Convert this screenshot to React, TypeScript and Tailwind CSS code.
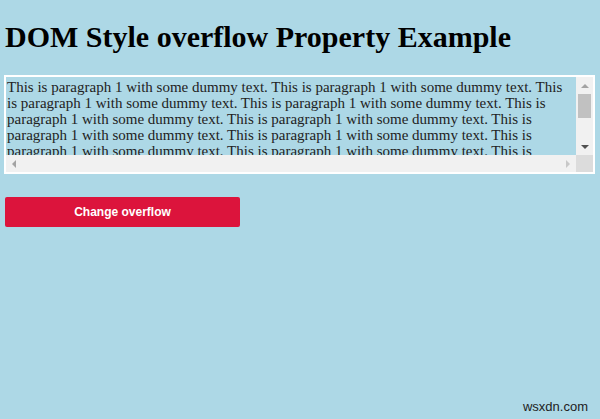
import React from 'react'

const PARA = Array(12).fill('This is paragraph 1 with some dummy text.').join(' ')

// classic scrollbar pieces, since headless chrome hides native ones
function Arrow({ dir, className }: { dir: 'up' | 'down' | 'left' | 'right'; className: string }) {
  const pts = {
    up: '0,4 4,0 8,4',
    down: '0,0 8,0 4,4',
    left: '4,0 4,8 0,4',
    right: '0,0 0,8 4,4',
  }[dir]
  const vertical = dir === 'up' || dir === 'down'
  return (
    <svg width={vertical ? 8 : 4} height={vertical ? 4 : 8} viewBox={vertical ? '0 0 8 4' : '0 0 4 8'} className={className}>
      <polygon points={pts} />
    </svg>
  )
}

export default function App() {
  return (
    <div className="min-h-[419px] w-full bg-[#add8e6] px-[4px] pt-[19px] font-['Liberation_Serif',serif] text-black">
      <h1 className="ml-[1px] text-[30px] font-bold leading-[36px]">DOM Style overflow Property Example</h1>
      <div className="mt-[20px] flex h-[99px] w-[591px] flex-col border-2 border-white">
        <div className="flex min-h-0 flex-1">
          <div className="flex-1 overflow-hidden bg-[#add8e6] text-[15px] leading-[16px] text-[#222]">
            <p className="w-[566px] pl-[1px] pt-[2px]">{PARA}</p>
          </div>
          <div className="flex w-[17px] flex-col items-center bg-[#f1f1f1]">
            <div className="flex h-[17px] items-center justify-center">
              <Arrow dir="up" className="fill-[#a3a3a3]" />
            </div>
            <div className="h-[24px] w-[13px] bg-[#c1c1c1]" />
            <div className="flex-1" />
            <div className="flex h-[17px] items-center justify-center">
              <Arrow dir="down" className="fill-[#505050]" />
            </div>
          </div>
        </div>
        <div className="flex h-[17px]">
          <div className="flex flex-1 items-center justify-between bg-[#f1f1f1] px-[6px]">
            <Arrow dir="left" className="fill-[#a3a3a3]" />
            <Arrow dir="right" className="fill-[#c8c8c8]" />
          </div>
          <div className="w-[17px] bg-[#dcdcdc]" />
        </div>
      </div>
      <button className="ml-[1px] mt-[23px] h-[30px] w-[235px] rounded-[2px] bg-[#dc143c] font-['Liberation_Sans',Arial,sans-serif] text-[12px] font-bold text-white">
        Change overflow
      </button>
      <div className="mt-[170px] pr-[8px] text-right font-['Liberation_Sans',Arial,sans-serif] text-[13px] text-[#222]">wsxdn.com</div>
    </div>
  )
}
